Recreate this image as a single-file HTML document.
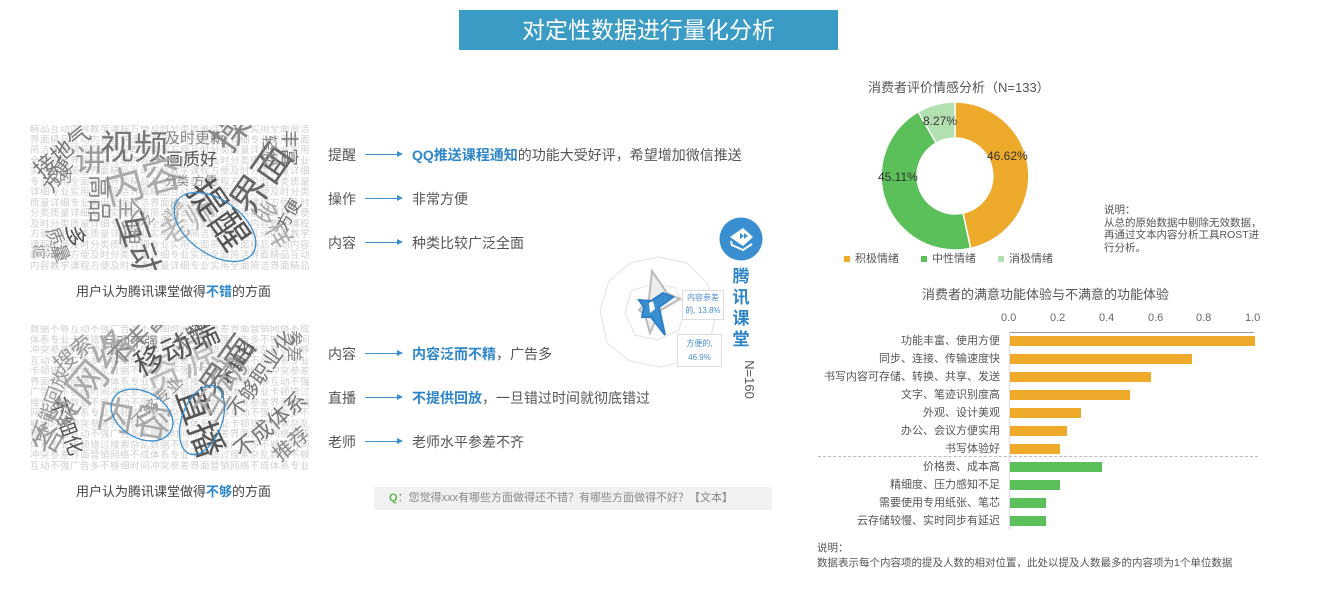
<!DOCTYPE html>
<html><head><meta charset="utf-8">
<style>
*{margin:0;padding:0;box-sizing:border-box}
body{width:1322px;height:602px;background:#fff;position:relative;overflow:hidden;font-family:"Liberation Sans","Noto Sans CJK SC",sans-serif;color:#555}
.a{position:absolute;white-space:nowrap}
.title{left:459px;top:10px;width:379px;height:40px;background:#3a9cc5;color:#fff;font-size:23px;text-align:center;line-height:40px}
.cloud{position:absolute;width:285px;height:145px;overflow:hidden}
.cloud span{position:absolute;white-space:nowrap;line-height:1;transform-origin:left top}
.fill{position:absolute;left:0;top:0;width:285px;font-size:9.5px;line-height:10.5px;color:#cfcfcf;white-space:normal;word-break:break-all;letter-spacing:0.5px}
.cap{font-size:13px;color:#444}
.cap b{color:#2e86c8}
.lbl{font-size:14px;color:#555}
.arrow{position:absolute;height:1px;background:#3a8fd0;width:36px}
.arrow:after{content:"";position:absolute;right:-2px;top:-3px;border-left:6px solid #3a8fd0;border-top:3.5px solid transparent;border-bottom:3.5px solid transparent}
.txt{font-size:14px;color:#555}
.txt b{color:#2e86c8}
.bl{position:absolute;right:322px;font-size:11px;color:#555;white-space:nowrap;line-height:12px}
.bar{position:absolute;left:1010px;height:10px}
.o{background:#eeaa2a}.g{background:#5cc05a}
</style></head><body>
<div class="a title">对定性数据进行量化分析</div>

<!-- cloud 1 -->
<div class="cloud" style="left:30px;top:125px">
<div class="fill">精品互动内容教学课程方便及时分类质量详细专业实用全面简洁界面精品互动内容教学课程方便及时分类质量详细专业实用全面简洁界面精品互动内容教学课程方便及时分类质量详细专业实用全面简洁界面精品互动内容教学课程方便及时分类质量详细专业实用全面简洁界面精品互动内容教学课程方便及时分类质量详细专业实用全面简洁界面精品互动内容教学课程方便及时分类质量详细专业实用全面简洁界面精品互动内容教学课程方便及时分类质量详细专业实用全面简洁界面精品互动内容教学课程方便及时分类质量详细专业实用全面简洁界面精品互动内容教学课程方便及时分类质量详细专业实用全面简洁界面精品互动内容教学课程方便及时分类质量详细专业实用全面简洁界面精品互动内容教学课程方便及时分类质量详细专业实用全面简洁界面精品互动内容教学课程方便及时分类质量详细专业实用全面简洁界面精品互动内容教学课程方便及时分类质量详细专业实用全面简洁界面精品互动内容教学课程方便及时分类质量详细专业实用全面简洁界面</div>
<span style="left:0;top:40px;font-size:22px;color:#777;transform:rotate(-40deg)">接地气</span>
<span style="left:70px;top:6px;font-size:34px;color:#777">视频</span>
<span style="left:45px;top:22px;font-size:30px;color:#999">讲</span>
<span style="left:135px;top:6px;font-size:15px;color:#888">及时更新</span>
<span style="left:136px;top:26px;font-size:17px;color:#555">画质好</span>
<span style="left:70px;top:48px;font-size:40px;color:#aaa;transform:rotate(-15deg)">内容</span>
<span style="left:10px;top:60px;font-size:18px;color:#777;transform:rotate(-55deg)">方便</span>
<span style="left:15px;top:45px;font-size:14px;color:#888">及时</span>
<span style="left:55px;top:100px;font-size:22px;color:#555;transform:rotate(90deg)">多</span>
<span style="left:80px;top:50px;font-size:24px;color:#888;transform:rotate(90deg)">高品</span>
<span style="left:110px;top:72px;font-size:24px;color:#999;transform:rotate(90deg)">全理</span>
<span style="left:112px;top:82px;font-size:34px;color:#666;transform:rotate(70deg)">互动</span>
<span style="left:30px;top:100px;font-size:18px;color:#888;transform:rotate(70deg)">质量</span>
<span style="left:2px;top:120px;font-size:14px;color:#999">简洁</span>
<span style="left:125px;top:100px;font-size:30px;color:#bbb;transform:rotate(-30deg)">老师</span>
<span style="left:135px;top:50px;font-size:12px;color:#888">分类 方便</span>
<span style="left:175px;top:12px;font-size:38px;color:#888;transform:rotate(-55deg)">操作</span>
<span style="left:195px;top:75px;font-size:38px;color:#666;transform:rotate(-55deg)">界面</span>
<span style="left:150px;top:70px;font-size:38px;color:#555;transform:rotate(55deg) translate(0,-38px)">提醒</span>
<span style="left:230px;top:10px;font-size:16px;color:#888;transform:rotate(90deg) translate(0,-16px)">轻松</span>
<span style="left:250px;top:5px;font-size:18px;color:#777;transform:rotate(90deg) translate(0,-18px)">丰富</span>
<span style="left:240px;top:70px;font-size:26px;color:#aaa;transform:rotate(60deg)">多样</span>
<span style="left:245px;top:100px;font-size:16px;color:#666;transform:rotate(-60deg)">方便</span>
<span style="left:130px;top:90px;font-size:12px;color:#aaa;transform:rotate(-45deg)">详细</span>
<span style="left:100px;top:110px;font-size:14px;color:#999;transform:rotate(-60deg)">广泛</span>
</div>
<div class="a cap" style="left:76px;top:281px">用户认为腾讯课堂做得<b>不错</b>的方面</div>
<svg class="a" style="left:168px;top:190px" width="100" height="80"><ellipse cx="47" cy="37" rx="46" ry="27" transform="rotate(35 47 37)" fill="none" stroke="#3a8fd0" stroke-width="1.3"/></svg>

<!-- cloud 2 -->
<div class="cloud" style="left:30px;top:325px">
<div class="fill">数据不够互动不强广告多不够细时间冲突参差界面营销网络不成体系专业卡顿错过搜索杂乱数据不够互动不强广告多不够细时间冲突参差界面营销网络不成体系专业卡顿错过搜索杂乱数据不够互动不强广告多不够细时间冲突参差界面营销网络不成体系专业卡顿错过搜索杂乱数据不够互动不强广告多不够细时间冲突参差界面营销网络不成体系专业卡顿错过搜索杂乱数据不够互动不强广告多不够细时间冲突参差界面营销网络不成体系专业卡顿错过搜索杂乱数据不够互动不强广告多不够细时间冲突参差界面营销网络不成体系专业卡顿错过搜索杂乱数据不够互动不强广告多不够细时间冲突参差界面营销网络不成体系专业卡顿错过搜索杂乱数据不够互动不强广告多不够细时间冲突参差界面营销网络不成体系专业卡顿错过搜索杂乱数据不够互动不强广告多不够细时间冲突参差界面营销网络不成体系专业卡顿错过搜索杂乱数据不够互动不强广告多不够细时间冲突参差界面营销网络不成体系专业卡顿错过搜索杂乱数据不够互动不强广告多不够细时间冲突参差界面营销网络不成体系专业卡顿错过搜索杂乱数据不够互动不强广告多不够细时间冲突参差界面营销网络不成体系专业卡顿错过</div>
<span style="left:20px;top:35px;font-size:22px;color:#999;transform:rotate(-40deg)">搜索</span>
<span style="left:72px;top:10px;font-size:14px;color:#888">互动不强</span>
<span style="left:30px;top:60px;font-size:40px;color:#aaa;transform:rotate(-50deg)">网络</span>
<span style="left:75px;top:30px;font-size:24px;color:#888;transform:rotate(-45deg)">不丰富</span>
<span style="left:105px;top:40px;font-size:40px;color:#bbb;transform:rotate(-25deg)">资源</span>
<span style="left:100px;top:30px;font-size:30px;color:#555;transform:rotate(-25deg)">移动端</span>
<span style="left:140px;top:18px;font-size:18px;color:#777;transform:rotate(-45deg)">不够细</span>
<span style="left:165px;top:60px;font-size:34px;color:#777;transform:rotate(-55deg)">界面</span>
<span style="left:190px;top:55px;font-size:16px;color:#555;transform:rotate(-60deg)">不知名</span>
<span style="left:195px;top:85px;font-size:20px;color:#777;transform:rotate(-55deg)">不够职业化</span>
<span style="left:0px;top:110px;font-size:18px;color:#999;transform:rotate(-70deg)">不能回放</span>
<span style="left:35px;top:70px;font-size:20px;color:#555;transform:rotate(70deg)">不细化</span>
<span style="left:0px;top:120px;font-size:30px;color:#999;transform:rotate(-60deg)">答疑</span>
<span style="left:70px;top:70px;font-size:38px;color:#aaa;transform:rotate(10deg)">内容</span>
<span style="left:140px;top:70px;font-size:36px;color:#555;transform:rotate(70deg) translate(0,-36px)">直播</span>
<span style="left:160px;top:85px;font-size:34px;color:#aaa;transform:rotate(-60deg)">互动</span>
<span style="left:200px;top:120px;font-size:22px;color:#777;transform:rotate(-40deg)">不成体系</span>
<span style="left:240px;top:125px;font-size:20px;color:#888;transform:rotate(-40deg)">推荐</span>
<span style="left:255px;top:5px;font-size:16px;color:#888;transform:rotate(90deg) translate(0,-16px)">参差</span>
<span style="left:100px;top:95px;font-size:16px;color:#999;transform:rotate(-45deg)">不够专业</span>
</div>
<div class="a cap" style="left:76px;top:481px">用户认为腾讯课堂做得<b>不够</b>的方面</div>
<svg class="a" style="left:90px;top:375px" width="180" height="100"><ellipse cx="52" cy="40" rx="33" ry="23" transform="rotate(30 52 40)" fill="none" stroke="#3a8fd0" stroke-width="1.3"/><ellipse cx="112" cy="45" rx="20" ry="36" transform="rotate(20 112 45)" fill="none" stroke="#3a8fd0" stroke-width="1.3"/></svg>

<!-- rows -->
<div class="a lbl" style="left:328px;top:145px">提醒</div><div class="arrow" style="left:365px;top:154px"></div><div class="a txt" style="left:412px;top:145px"><b>QQ推送课程通知</b>的功能大受好评，希望增加微信推送</div>
<div class="a lbl" style="left:328px;top:189px">操作</div><div class="arrow" style="left:365px;top:198px"></div><div class="a txt" style="left:412px;top:189px">非常方便</div>
<div class="a lbl" style="left:328px;top:233px">内容</div><div class="arrow" style="left:365px;top:242px"></div><div class="a txt" style="left:412px;top:233px">种类比较广泛全面</div>
<div class="a lbl" style="left:328px;top:344px">内容</div><div class="arrow" style="left:365px;top:353px"></div><div class="a txt" style="left:412px;top:344px"><b>内容泛而不精</b>，广告多</div>
<div class="a lbl" style="left:328px;top:388px">直播</div><div class="arrow" style="left:365px;top:397px"></div><div class="a txt" style="left:412px;top:388px"><b>不提供回放</b>，一旦错过时间就彻底错过</div>
<div class="a lbl" style="left:328px;top:432px">老师</div><div class="arrow" style="left:365px;top:441px"></div><div class="a txt" style="left:412px;top:432px">老师水平参差不齐</div>

<div class="a" style="left:374px;top:487px;width:398px;height:23px;background:#f1f1f1;font-size:11px;color:#888;line-height:23px;padding-left:15px"><span style="color:#5ab84a;font-weight:bold">Q</span>：您觉得xxx有哪些方面做得还不错？有哪些方面做得不好？【文本】</div>

<!-- radar -->
<svg class="a" style="left:595px;top:255px" width="130" height="115">
<polygon points="63,2 92,8 112,28 122,55 115,85 95,105 65,112 35,106 12,88 5,55 14,26 35,8" fill="none" stroke="#e3e3e3"/>
<polygon points="60,28 80,33 90,52 84,75 62,85 40,80 30,58 36,36" fill="none" stroke="#e3e3e3"/>
<polygon points="57,16 72,38 85,44 66,55 60,67 55,78 50,60 44,55 54,44" fill="#eee" stroke="#bbb" stroke-width="2"/>
<polygon points="68,38 78,42 64,52 70,80 56,62 47,62 49,52 44,45 56,46" fill="#3a8fd0" stroke="#2e7fc8" stroke-width="2"/>
<polygon points="54,48 58,46 60,54 55,58" fill="#fff"/>
</svg>
<div class="a" style="left:682px;top:290px;width:42px;height:30px;border:1px solid #ddd;background:#fff;font-size:8px;color:#4a8fd0;line-height:13px;text-align:center">内容参差<br>的, 13.8%</div>
<div class="a" style="left:677px;top:334px;width:45px;height:33px;border:1px solid #ddd;background:#fff;font-size:8px;color:#4a8fd0;line-height:14px;text-align:center;padding-top:2px">方便的,<br>46.9%</div>
<svg class="a" style="left:719px;top:217px" width="44" height="44"><circle cx="22" cy="22" r="21.5" fill="#3a8fd0"/><path d="M11 20 L24 11 L34 20 L24 29 Z" fill="#fff"/><path d="M21 16 l4 3 -4 3z M25 16 l4 3 -4 3z" fill="#3a8fd0"/><path d="M12 24 L13 28 L24 33 L33 27" fill="none" stroke="#fff" stroke-width="2"/></svg>
<div class="a" style="left:732px;top:266px;width:18px;font-size:17px;font-weight:bold;color:#2e86c8;line-height:21px;text-align:center">腾<br>讯<br>课<br>堂</div>
<div class="a" style="left:730px;top:372px;font-size:13px;color:#555;transform:rotate(90deg);transform-origin:center">N=160</div>

<!-- donut -->
<div class="a" style="left:868px;top:77px;font-size:13px;color:#555">消费者评价情感分析（N=133）</div>
<svg class="a" style="left:0;top:0" width="1322" height="300">
<path d="M955,102 A74,74 0 0 1 970.6,248.3 L963,213.1 A38,38 0 0 0 955,138 Z" fill="#eeaa2a" stroke="#fff" stroke-width="1.5"/>
<path d="M970.6,248.3 A74,74 0 0 1 918.2,111.8 L936.1,143 A38,38 0 0 0 963,213.1 Z" fill="#5cc05a" stroke="#fff" stroke-width="1.5"/>
<path d="M918.2,111.8 A74,74 0 0 1 955,102 L955,138 A38,38 0 0 0 936.1,143 Z" fill="#b3e0b0" stroke="#fff" stroke-width="1.5"/>
<text x="987" y="160" font-size="12" fill="#333" font-family="Liberation Sans">46.62%</text>
<text x="878" y="181" font-size="12" fill="#333" font-family="Liberation Sans">45.11%</text>
<text x="923" y="125" font-size="12" fill="#333" font-family="Liberation Sans">8.27%</text>
</svg>
<div class="a" style="left:844px;top:250px;font-size:11px;color:#555"><span style="display:inline-block;width:6px;height:6px;background:#eeaa2a;margin-right:5px"></span>积极情绪<span style="display:inline-block;width:6px;height:6px;background:#5cc05a;margin:0 5px 0 22px"></span>中性情绪<span style="display:inline-block;width:6px;height:6px;background:#b3e0b0;margin:0 5px 0 22px"></span>消极情绪</div>
<div class="a" style="left:1104px;top:204px;font-size:10.5px;color:#555;line-height:12.5px">说明：<br>从总的原始数据中剔除无效数据，<br>再通过文本内容分析工具ROST进<br>行分析。</div>

<!-- bar chart -->
<div class="a" style="left:922px;top:284px;font-size:13px;color:#555">消费者的满意功能体验与不满意的功能体验</div>
<div class="a" style="left:1001px;top:312px;font-size:11px;color:#666;width:270px">
<span class="a" style="left:0">0.0</span><span class="a" style="left:49px">0.2</span><span class="a" style="left:98px">0.4</span><span class="a" style="left:147px">0.6</span><span class="a" style="left:195px">0.8</span><span class="a" style="left:244px">1.0</span></div>
<div class="a" style="left:1010px;top:332px;width:244px;height:1px;background:#999"></div>
<div class="a" style="left:1009px;top:332px;width:1px;height:198px;background:#ddd"></div>
<div class="a" style="left:818px;top:456px;width:440px;border-top:1px dashed #bbb"></div>
<div class="bar o" style="top:336px;width:245px"></div><div class="bl" style="top:335px">功能丰富、使用方便</div>
<div class="bar o" style="top:354px;width:182px"></div><div class="bl" style="top:353px">同步、连接、传输速度快</div>
<div class="bar o" style="top:372px;width:141px"></div><div class="bl" style="top:371px">书写内容可存储、转换、共享、发送</div>
<div class="bar o" style="top:390px;width:120px"></div><div class="bl" style="top:389px">文字、笔迹识别度高</div>
<div class="bar o" style="top:408px;width:71px"></div><div class="bl" style="top:407px">外观、设计美观</div>
<div class="bar o" style="top:426px;width:57px"></div><div class="bl" style="top:425px">办公、会议方便实用</div>
<div class="bar o" style="top:444px;width:50px"></div><div class="bl" style="top:443px">书写体验好</div>
<div class="bar g" style="top:462px;width:92px"></div><div class="bl" style="top:461px">价格贵、成本高</div>
<div class="bar g" style="top:480px;width:50px"></div><div class="bl" style="top:479px">精细度、压力感知不足</div>
<div class="bar g" style="top:498px;width:36px"></div><div class="bl" style="top:497px">需要使用专用纸张、笔芯</div>
<div class="bar g" style="top:516px;width:36px"></div><div class="bl" style="top:515px">云存储较慢、实时同步有延迟</div>
<div class="a" style="left:817px;top:541px;font-size:10.5px;color:#555;line-height:15px">说明：<br>数据表示每个内容项的提及人数的相对位置，此处以提及人数最多的内容项为1个单位数据</div>
</body></html>
